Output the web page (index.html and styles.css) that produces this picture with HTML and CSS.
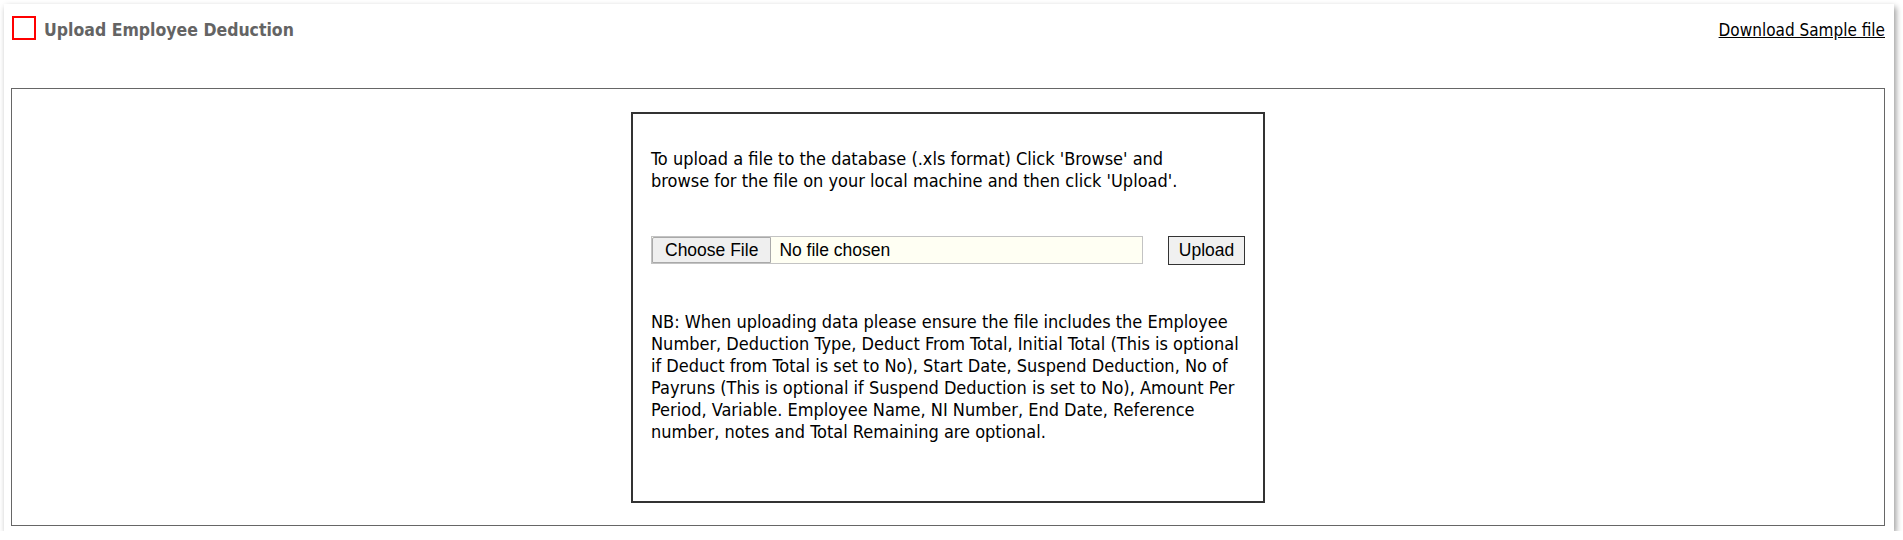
FILE: index.html
```html
<!DOCTYPE html>
<html lang="en">
  <head>
    <meta charset="UTF-8" />
    <meta name="viewport" content="width=device-width, initial-scale=1.0" />
    <title>Upload Employee Deduction</title>
    <link rel="stylesheet" href="styles.css">
  </head>
  <body>
    <div class="upload-panel">
      <div class="panel-header">
        <div class="header-left">
          <span class="title-icon"></span>
          <h2 class="panel-title">Upload Employee Deduction</h2>
        </div>
        <a class="sample-link" href="#">Download Sample file</a>
      </div>
      <div class="panel-body">
        <div class="upload-box">
          <p class="upload-intro">
            To upload a file to the database (.xls format) Click 'Browse' and
            browse for the file on your local machine and then click 'Upload'.
          </p>
          <div class="file-row">
            <input class="file-input" type="file" />
            <button class="upload-btn" type="button">Upload</button>
          </div>
          <p class="upload-note">
            NB: When uploading data please ensure the file includes the Employee
            Number, Deduction Type, Deduct From Total, Initial Total (This is optional
            if Deduct from Total is set to No), Start Date, Suspend Deduction, No of
            Payruns (This is optional if Suspend Deduction is set to No), Amount Per
            Period, Variable. Employee Name, NI Number, End Date, Reference
            number, notes and Total Remaining are optional.
          </p>
        </div>
      </div>
    </div>
  </body>
</html>
```

FILE: styles.css
```css
* {
  margin: 0;
  padding: 0;
  box-sizing: border-box;
}

body {
  background: #fff;
  color: #000;
  font-family: "DejaVu Sans Condensed", "DejaVu Sans", sans-serif;
}

.upload-panel {
  margin: 4px 9px 0 4px;
  padding: 8px 9px 5px 7px;
  background: #fff;
  box-shadow: 2px 3px 6px rgba(0, 0, 0, 0.4);
}

.panel-header {
  display: flex;
  justify-content: space-between;
  align-items: flex-start;
  height: 76px;
}

.header-left {
  display: flex;
  align-items: flex-start;
}

.title-icon {
  width: 24px;
  height: 24px;
  margin: 4px 0 0 1px;
  border: 2px solid #f00;
}

.panel-title {
  margin: 7px 0 0 8px;
  font-size: 17.5px;
  line-height: 22px;
  font-weight: bold;
  color: #646464;
}

.sample-link {
  margin-top: 7px;
  font-size: 17px;
  line-height: 22px;
  color: #000;
  text-decoration: underline;
}

.panel-body {
  height: 438px;
  padding-top: 23px;
  border: 1px solid #666;
}

.upload-box {
  width: 634px;
  height: 391px;
  margin: 0 auto;
  padding: 34px 18px 0;
  border: 2px solid #333;
  font-size: 18px;
  line-height: 22px;
}

.upload-intro {
  max-width: 530px;
}

.file-row {
  display: flex;
  align-items: flex-start;
  gap: 25px;
  margin: 44px 0 46px;
}

.file-input {
  width: 493px;
  height: 28px;
  border: 1px solid #c3c3c3;
  background: #fffff3;
  font: 17.5px "Liberation Sans", Arial, sans-serif;
  color: #000;
}

.file-input::file-selector-button {
  height: 26px;
  margin: 0 8px 0 0;
  padding: 0 12px;
  border: 1px solid #a9a9a9;
  border-radius: 2px 0 0 0;
  background: #efefef;
  font: inherit;
  color: #000;
}

.upload-btn {
  width: 77px;
  height: 29px;
  border: 1px solid #333;
  background: #f0f0f0;
  font: 17.5px "Liberation Sans", Arial, sans-serif;
  color: #000;
  cursor: pointer;
}
```
